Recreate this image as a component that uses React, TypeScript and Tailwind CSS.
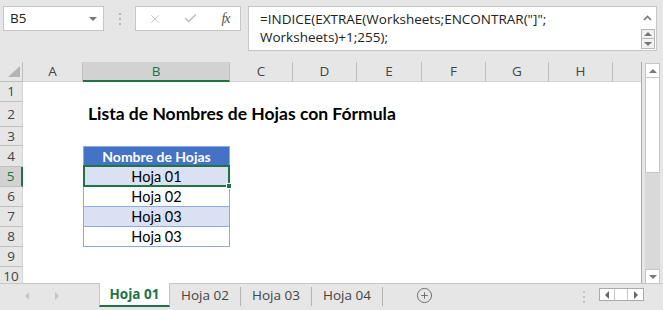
import { X, Check, CirclePlus } from 'lucide-react';

const COLS = [
  { id: 'A', w: 'w-[60px]' },
  { id: 'B', w: 'w-[147px]' },
  { id: 'C', w: 'w-[63px]' },
  { id: 'D', w: 'w-[64px]' },
  { id: 'E', w: 'w-[65px]' },
  { id: 'F', w: 'w-[64px]' },
  { id: 'G', w: 'w-[63px]' },
  { id: 'H', w: 'w-[64px]' },
];

const ROWS = [
  { n: 1, h: 'h-[20px]' },
  { n: 2, h: 'h-[25px]' },
  { n: 3, h: 'h-[19px]' },
  { n: 4, h: 'h-[21px]' },
  { n: 5, h: 'h-[20px]' },
  { n: 6, h: 'h-[20px]' },
  { n: 7, h: 'h-[20px]' },
  { n: 8, h: 'h-[20px]' },
  { n: 9, h: 'h-[20px]' },
  { n: 10, h: 'h-[20px]' },
];

const SHEETS = ['Hoja 02', 'Hoja 03', 'Hoja 04'];

const ui = "font-['Open_Sans','Noto_Sans',sans-serif]";
const cellFont = "font-['Lato','Liberation_Sans',sans-serif]";

function TableCell({ row }: { row: number }) {
  if (row === 2) {
    return (
      <div className={`w-[147px] h-full flex items-center pl-[5px] whitespace-nowrap text-[17.5px] font-bold text-black ${cellFont}`}>
        Lista de Nombres de Hojas con Fórmula
      </div>
    );
  }
  if (row === 4) {
    return (
      <div className={`w-[147px] h-full flex items-center justify-center bg-[#4472c4] border border-[#8ea9db] text-white font-bold text-[14px] ${cellFont}`}>
        Nombre de Hojas
      </div>
    );
  }
  if (row >= 5 && row <= 8) {
    const labels: Record<number, string> = { 5: 'Hoja 01', 6: 'Hoja 02', 7: 'Hoja 03', 8: 'Hoja 03' };
    const band = row % 2 === 1 ? 'bg-[#d9e1f2]' : 'bg-white';
    return (
      <div className={`relative w-[147px] h-full flex items-center justify-center border-x border-b border-[#8ea9db] text-black text-[14.5px] ${band} ${cellFont}`}>
        {labels[row]}
        {row === 5 && (
          <>
            <div className="absolute -left-[1px] -right-[1px] -top-[2px] -bottom-[1px] border-2 border-[#217346]" />
            <div className="absolute -right-[3px] -bottom-[3px] w-[6px] h-[6px] bg-[#217346] border border-white z-10" />
          </>
        )}
      </div>
    );
  }
  return <div className="w-[147px] h-full" />;
}

export default function App() {
  return (
    <div className={`w-[663px] h-[310px] bg-[#e6e6e6] overflow-hidden flex flex-col ${ui}`}>
      {/* Formula bar */}
      <div className="h-[62px] flex items-start pt-[6px] pl-[3px] shrink-0">
        <div className="w-[101px] h-[25px] bg-white border border-[#c6c6c6] flex items-center pl-[6px] pr-[6px]">
          <span className="text-[13.5px] text-[#222] flex-1">B5</span>
          <span className="w-0 h-0 border-l-[4px] border-r-[4px] border-t-[4px] border-l-transparent border-r-transparent border-t-[#777]" />
        </div>
        <div className="w-[31px] h-[25px] flex flex-col items-center justify-center gap-[3px]">
          <span className="w-[2px] h-[2px] bg-[#b4b4b4]" />
          <span className="w-[2px] h-[2px] bg-[#b4b4b4]" />
          <span className="w-[2px] h-[2px] bg-[#b4b4b4]" />
        </div>
        <div className="w-[106px] h-[25px] bg-white border border-[#c6c6c6] flex items-center">
          <div className="w-[36px] flex justify-center pl-[2px]">
            <X size={14} strokeWidth={1.5} color="#c2c2c2" />
          </div>
          <div className="w-[36px] flex justify-center">
            <Check size={15} strokeWidth={2.5} color="#c2c2c2" />
          </div>
          <div className="w-[32px] flex justify-center pl-[3px]">
            <span className="font-['Liberation_Serif',serif] italic text-[14px] text-[#555] tracking-[-1px]">fx</span>
          </div>
        </div>
        <div className="ml-[7px] w-[409px] h-[45px] bg-white border border-[#c6c6c6] flex">
          <div className="flex-1 pl-[11px] pt-[3px] text-[13.5px] leading-[18px] text-[#222]">
            =INDICE(EXTRAE(Worksheets;ENCONTRAR("]";
            <br />
            Worksheets)+1;255);
          </div>
          <div className="w-[17px] flex flex-col items-center pt-[8px]">
            <svg width="9" height="6" viewBox="0 0 9 6" className="mb-[8px]">
              <path d="M1 5 L4.5 1.5 L8 5" fill="none" stroke="#777" strokeWidth="1.6" />
            </svg>
            <div className="w-[14px] h-[10px] bg-[#f0f0f0] border border-[#b9b9b9] flex items-center justify-center">
              <span className="w-0 h-0 border-l-[4px] border-r-[4px] border-b-[4px] border-l-transparent border-r-transparent border-b-[#777]" />
            </div>
            <div className="w-[14px] h-[10px] bg-[#f0f0f0] border border-t-0 border-[#b9b9b9] flex items-center justify-center">
              <span className="w-0 h-0 border-l-[4px] border-r-[4px] border-t-[4px] border-l-transparent border-r-transparent border-t-[#777]" />
            </div>
          </div>
        </div>
      </div>

      {/* Grid + vertical scrollbar */}
      <div className="h-[221px] flex shrink-0 overflow-hidden">
        <div className="w-[641px] flex flex-col bg-white overflow-hidden">
          <div className="h-[20px] flex shrink-0 bg-[#e6e6e6] text-[13.5px] text-[#444]">
            <div className="w-[23px] h-full border-r border-b border-[#bfbfbf] relative">
              <svg width="23" height="20" viewBox="0 0 23 20" className="absolute inset-0">
                <path d="M8 15 L20 15 L20 4 Z" fill="#b4b4b4" />
              </svg>
            </div>
            {COLS.map((c) =>
              c.id === 'B' ? (
                <div key={c.id} className={`${c.w} h-full flex items-center justify-center bg-[#d2d2d2] border-r border-[#bfbfbf] border-b-2 border-b-[#217346] text-[#217346]`}>
                  {c.id}
                </div>
              ) : (
                <div key={c.id} className={`${c.w} h-full flex items-center justify-center border-r border-b border-[#bfbfbf] border-b-[#d4d4d4]`}>
                  {c.id}
                </div>
              )
            )}
            <div className="flex-1 h-full border-b border-[#d4d4d4]" />
          </div>
          {ROWS.map((r) => (
            <div key={r.n} className={`${r.h} flex shrink-0`}>
              {r.n === 5 ? (
                <div className="w-[23px] h-full bg-[#d2d2d2] border-b border-[#bfbfbf] border-r-2 border-r-[#217346] flex items-center justify-center text-[13.5px] text-[#217346]">
                  {r.n}
                </div>
              ) : (
                <div className="w-[23px] h-full bg-[#e6e6e6] border-b border-r border-[#bfbfbf] border-r-[#d4d4d4] flex items-center justify-center text-[13.5px] text-[#444]">
                  {r.n}
                </div>
              )}
              <div className="w-[60px] h-full" />
              <TableCell row={r.n} />
            </div>
          ))}
        </div>
        <div className="w-[22px] h-full border-l border-[#ababab] bg-[#e6e6e6] pl-[3px] pt-[1px] flex flex-col">
          <div className="w-[15px] h-[15px] bg-white border border-[#c6c6c6] flex items-center justify-center shrink-0">
            <span className="w-0 h-0 border-l-[4px] border-r-[4px] border-b-[4px] border-l-transparent border-r-transparent border-b-[#777]" />
          </div>
          <div className="w-[15px] h-[95px] bg-white border border-t-0 border-[#c6c6c6] shrink-0" />
          <div className="w-[15px] flex-1 bg-[#d9d9d9]" />
          <div className="w-[15px] h-[14px] bg-white border border-b-0 border-[#c6c6c6] flex items-center justify-center shrink-0">
            <span className="w-0 h-0 border-l-[4px] border-r-[4px] border-t-[4px] border-l-transparent border-r-transparent border-t-[#777]" />
          </div>
        </div>
      </div>

      {/* Sheet tabs */}
      <div className="flex-1 flex items-start text-[13.5px]">
        <div className="w-[99px] h-full border-t border-[#c6c6c6] flex items-start pt-[8px]">
          <span className="ml-[25px] w-0 h-0 border-t-[4px] border-b-[4px] border-r-[4px] border-t-transparent border-b-transparent border-r-[#c6c6c6]" />
          <span className="ml-[26px] w-0 h-0 border-t-[4px] border-b-[4px] border-l-[4px] border-t-transparent border-b-transparent border-l-[#c6c6c6]" />
        </div>
        <div className="w-[71px] h-[24px] bg-white border-x border-[#c6c6c6] border-b-[2px] border-b-[#217346] flex items-center justify-center font-bold text-[#217346]">
          Hoja 01
        </div>
        <div className="flex-1 h-full border-t border-[#c6c6c6] flex items-start">
          {SHEETS.map((s) => (
            <div key={s} className="flex items-start">
              <div className="w-[70px] h-[23px] flex items-center justify-center text-[#444]">{s}</div>
              <div className="w-px h-[19px] mt-[3px] bg-[#b4b4b4]" />
            </div>
          ))}
          <div className="ml-[33px] mt-[3px]">
            <CirclePlus size={17} strokeWidth={1.3} color="#666" />
          </div>
          <div className="ml-[150px] mt-[7px] flex flex-col gap-[3px]">
            <span className="w-[2px] h-[2px] bg-[#c0c0c0]" />
            <span className="w-[2px] h-[2px] bg-[#c0c0c0]" />
            <span className="w-[2px] h-[2px] bg-[#c0c0c0]" />
          </div>
          <div className="ml-[14px] mt-[4px] w-[45px] h-[13px] bg-white border border-[#ababab] flex">
            <div className="w-[15px] h-full border-r border-[#c6c6c6] flex items-center justify-center">
              <span className="w-0 h-0 border-t-[4px] border-b-[4px] border-r-[4px] border-t-transparent border-b-transparent border-r-[#666]" />
            </div>
            <div className="w-[13px] h-full border-r border-[#c6c6c6]" />
            <div className="flex-1 h-full flex items-center justify-center">
              <span className="w-0 h-0 border-t-[4px] border-b-[4px] border-l-[4px] border-t-transparent border-b-transparent border-l-[#666]" />
            </div>
          </div>
        </div>
      </div>
    </div>
  );
}
